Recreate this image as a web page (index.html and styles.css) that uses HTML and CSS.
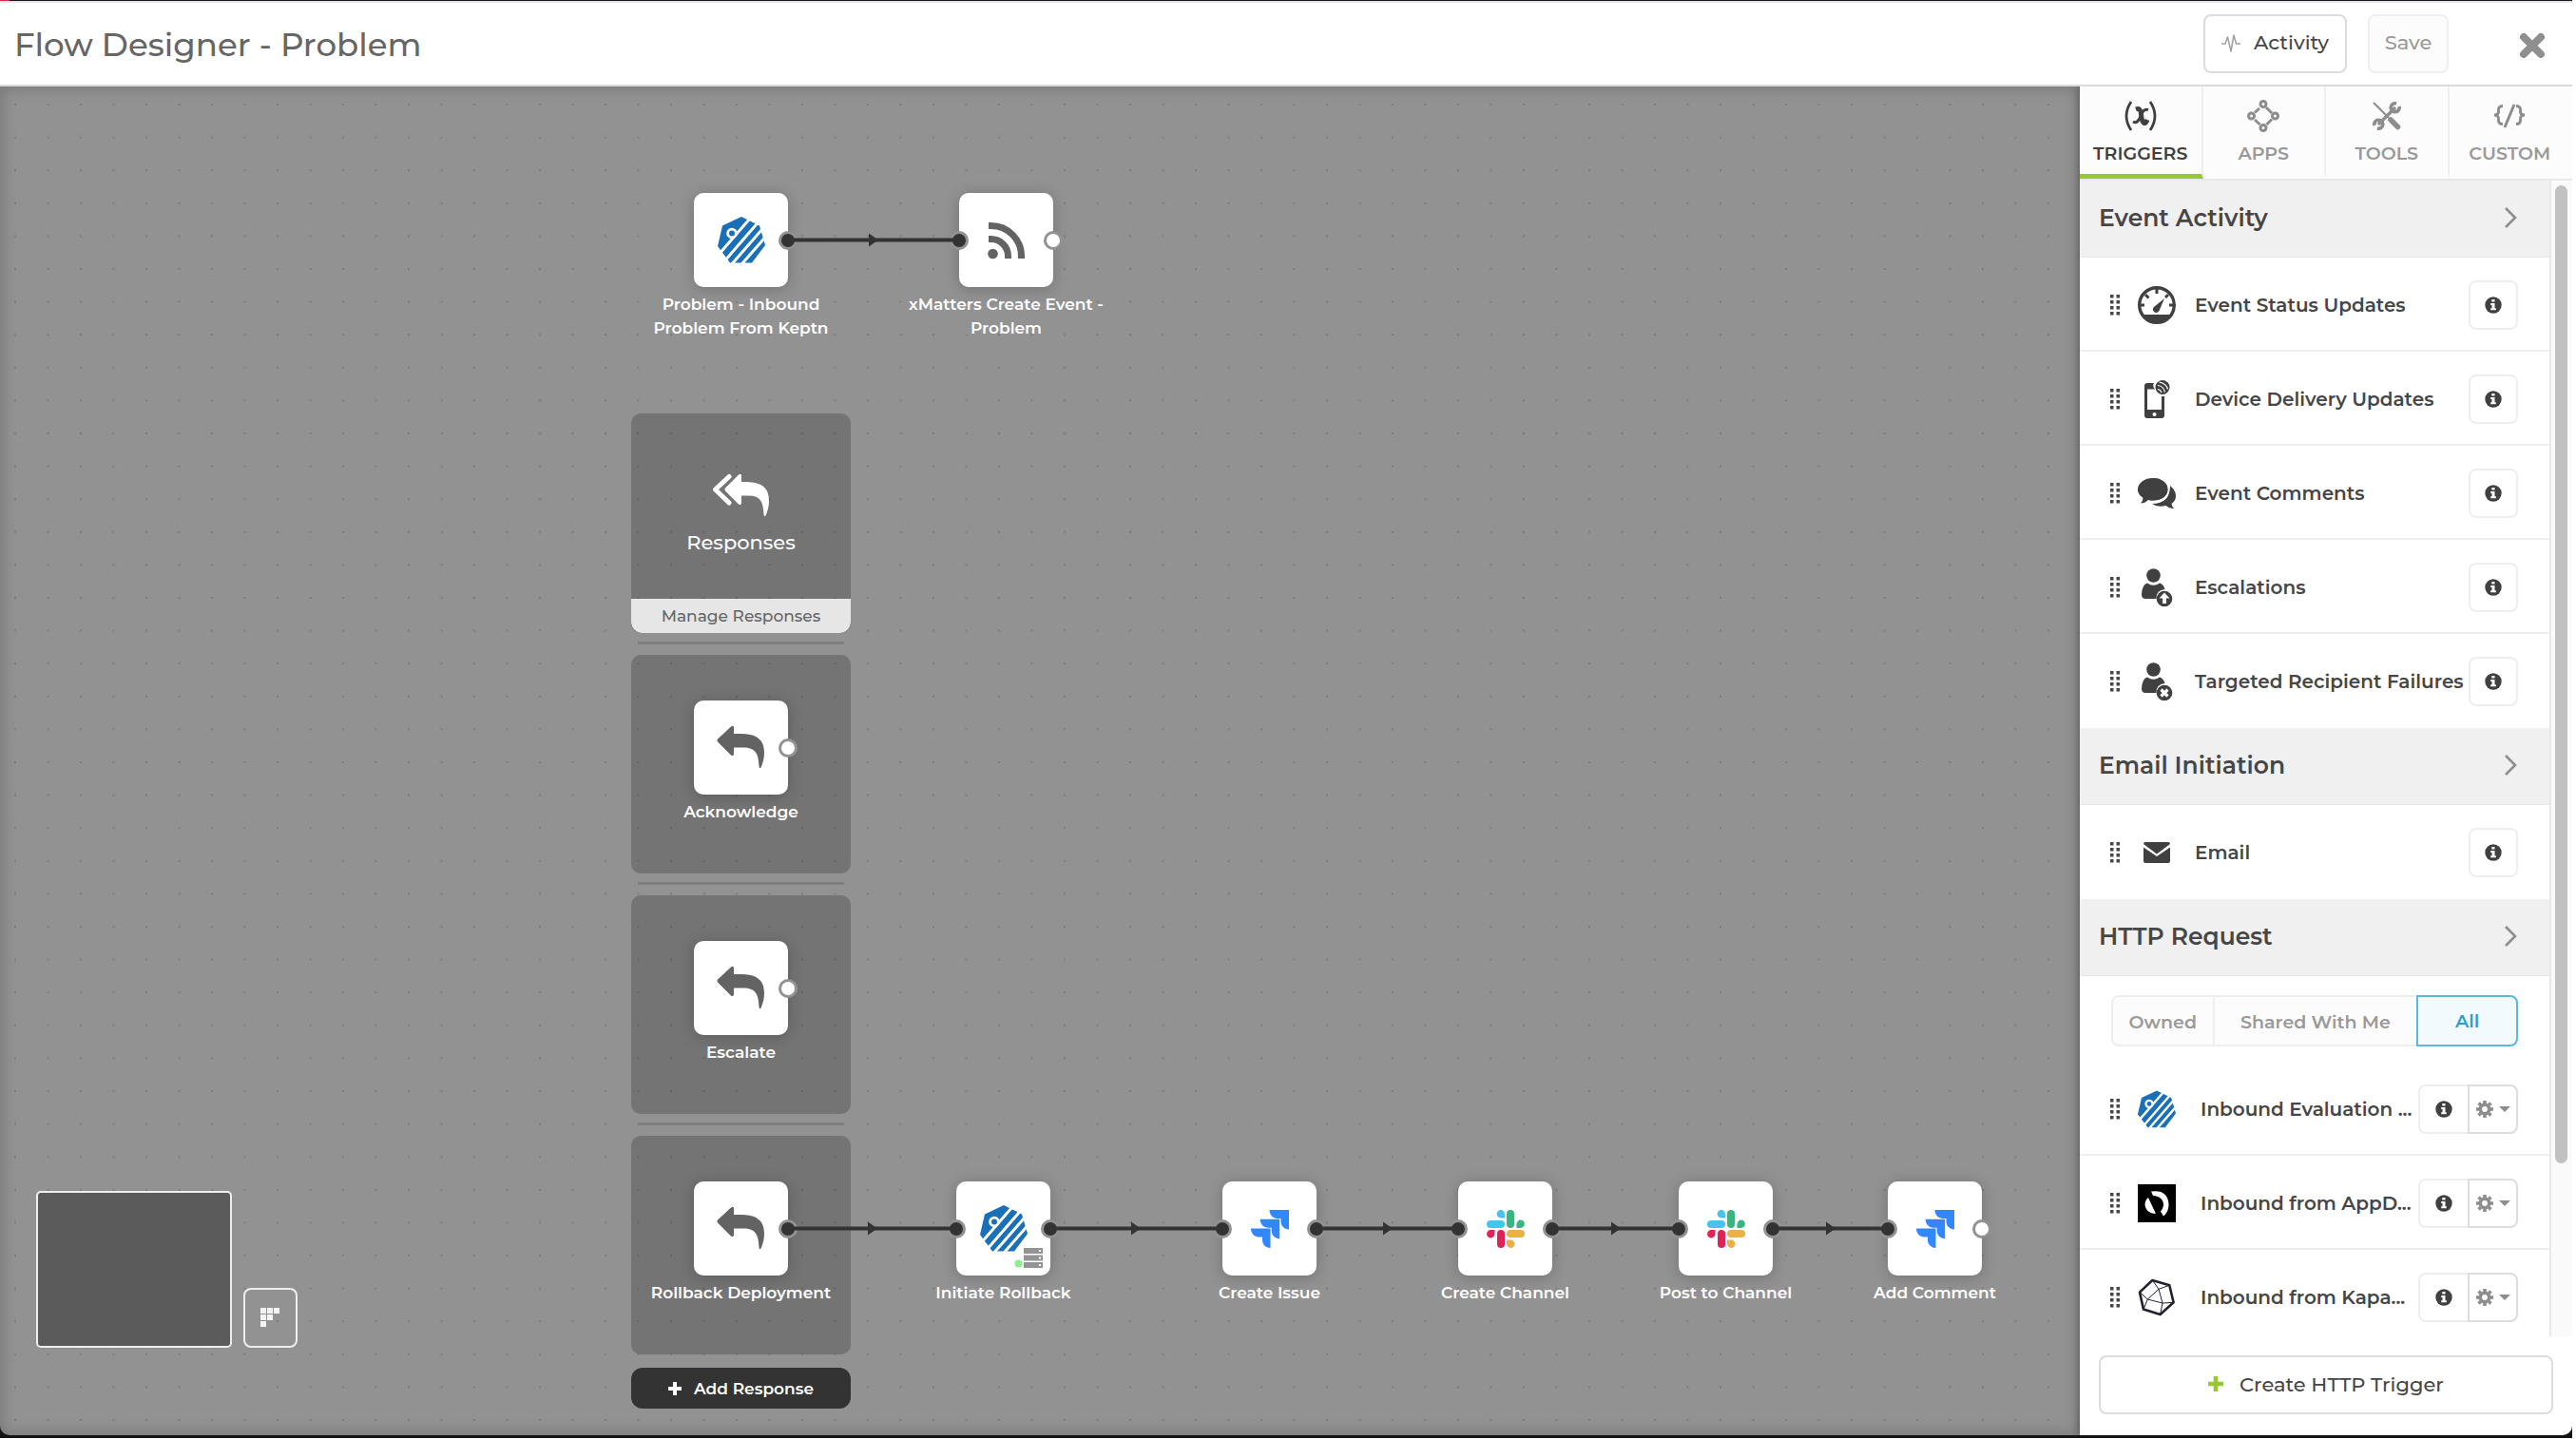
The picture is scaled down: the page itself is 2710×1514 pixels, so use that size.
FILE: index.html
```html
<!DOCTYPE html>
<html lang="en">
<head>
<meta charset="utf-8">
<title>Flow Designer - Problem</title>
<link rel="stylesheet" href="styles.css">
</head>
<body>
<svg class="sprite" aria-hidden="true">
  <symbol id="keptn" viewBox="0 0 50 49">
    <path fill="#1a70b8" d="M25 0 5 9.500 0 31 13 48.500H36L50 30 44 9.500z"/>
    <g stroke="#fff" stroke-width="3"><path d="M-2 43.300 36-.4M0 55 46 2M4 62.400 52 7.200M16 60.600 54 17"/></g>
    <circle cx="15" cy="17.500" r="4.400" fill="#1a70b8" stroke="#fff" stroke-width="2.800"/>
  </symbol>
  <symbol id="rss" viewBox="0 0 40 40">
    <circle cx="5.500" cy="34" r="5.300" fill="#636363"/>
    <path d="M1 4.500H3A32 32 0 0 1 35.500 37V39M1 18.500H3A18 18 0 0 1 21.500 37V39" fill="none" stroke="#636363" stroke-width="7" stroke-linejoin="round"/>
  </symbol>
  <symbol id="reply" viewBox="0 0 51 47">
    <path fill="currentColor" d="M1 14.500 15 1.500Q18-.5 18 2.500V9H24C41 9 50 14 50 29 50 35 48.500 40 46.500 44.500Q45 46.500 44.500 43.500C44 30 41 23.500 28 23.500H18V30Q18 33 15 31.500L1 17.500Q0 16 1 14.500z"/>
  </symbol>
  <symbol id="reply-all" viewBox="0 0 62 47">
    <path d="M18 3.500 3.500 17 18 31" fill="none" stroke="currentColor" stroke-width="5" stroke-linecap="round" stroke-linejoin="round"/>
    <path fill="currentColor" d="M14 15.500 28 1.500Q31-.5 31 2.500V9H35C51 9 60 14 60 29 60 35 58.500 40 56.500 44.500Q55 46.500 54.500 43.500C54 30 51 23.500 39 23.500H31V31Q31 34 28 32.500L14 18.500Q13 17 14 15.500z"/>
  </symbol>
  <symbol id="jira" viewBox="0 0 40 40">
    <g fill="#3187fb"><path id="jp" d="M19.500 0H40V20.500C35 20 31.500 17 31.500 12V9H28C23 9 19.500 5 19.500 0z"/><use href="#jp" transform="translate(-9.800 9.800)"/><use href="#jp" transform="translate(-19.500 19.500)"/></g>
  </symbol>
  <symbol id="slack" viewBox="0 0 40 40">
    <g fill="#45c5ee"><rect y="11" width="19" height="8" rx="4"/><path d="M19 8.500H15A4.200 4.200 0 1 1 19 4.500z"/></g>
    <g fill="#3bb580"><rect x="21" width="8" height="19" rx="4"/><path d="M31.500 19V15A4.200 4.200 0 1 1 35.500 19z"/></g>
    <g fill="#df2359"><rect x="11" y="21" width="8" height="19" rx="4"/><path d="M8.500 21V25A4.200 4.200 0 1 1 4.500 21z"/></g>
    <g fill="#ecb146"><rect x="21" y="21" width="19" height="8" rx="4"/><path d="M21 31.500H25A4.200 4.200 0 1 1 21 35.500z"/></g>
  </symbol>
  <symbol id="grip" viewBox="0 0 10 22">
    <path fill="#464646" d="M0 0h3.500v3.500H0zM6.500 0H10v3.500H6.500zM0 6h3.500v3.500H0zM6.500 6H10v3.500H6.500zM0 12h3.500v3.500H0zM6.500 12H10v3.500H6.500zM0 18h3.500v3.500H0zM6.500 18H10v3.500H6.500z"/>
  </symbol>
  <symbol id="info" viewBox="0 0 18 18">
    <circle cx="9" cy="9" r="8.700" fill="#404040"/><path fill="#fff" d="M7.300 3h3.200v2.500H7.300zM6.200 7h4.300v5.300h1.300V14.300H6.200v-2h1.300V9H6.200z"/>
  </symbol>
  <symbol id="chevron" viewBox="0 0 14 22"><path d="M2 1 12 11 2 21" fill="none" stroke="#8d8d8d" stroke-width="2.600"/></symbol>
  <symbol id="plus" viewBox="0 0 14 14"><path fill="currentColor" d="M5 0h4v5h5v4H9v5H5V9H0V5h5z"/></symbol>
  <symbol id="gauge" viewBox="0 0 40 40">
    <circle cx="20" cy="20" r="18.300" fill="none" stroke="#404040" stroke-width="3.400"/>
    <path fill="#404040" d="M6 30H34L30 35 20 39 10 35zM28 13 22.500 26Q20 29.500 17 27 14.500 24 17.500 21.500z"/>
    <path d="M20 3v5M8 9l3.500 3.500M32 9l-3 3M2 20h5M33 20h5" stroke="#404040" stroke-width="3"/>
  </symbol>
  <symbol id="phone" viewBox="0 0 40 40">
    <path fill="#404040" fill-rule="evenodd" d="M10 3H17Q15 6 18 9.500H10V31H25V17H28V37Q28 40 25 40H10Q7 40 7 37V6Q7 3 10 3zM17.500 34a2 2 0 1 0 .1 0z"/>
    <circle cx="26" cy="7.500" r="7.500" fill="#404040"/>
    <path d="M21 5.500Q27 6 28.500 12.500M22.500 2Q30 3.500 31.500 9.500M21 9.500Q24 10 25 13" fill="none" stroke="#fff" stroke-width="1.200"/>
  </symbol>
  <symbol id="comments" viewBox="0 0 40 40">
    <path fill="#404040" d="M34 12Q40 17 40 22.500 40 28 35.500 31 36 34 38 36 33 36 29.500 33 20 35 15 31 34 31 34 12z"/>
    <path fill="#404040" d="M16 4C25 4 31.500 9 31.500 16S25 27.500 16 27.500Q13.500 27.500 11 27 7.500 30.500 3 30.500 5.500 28 5.500 24.500 0 21 0 16 0 9 16 4z"/>
    <ellipse cx="15.700" cy="15.700" rx="15.700" ry="11.700" fill="#404040"/>
  </symbol>
  <symbol id="user" viewBox="0 0 40 40">
    <circle cx="16.500" cy="7.500" r="7.300" fill="#404040"/>
    <path fill="#404040" d="M10 15.500Q16.500 20 23 15.500 27 16.500 28.500 22 19 23 19.500 32H7.500Q4 31.500 4 27.500 4.500 17 10 15.500z"/>
    <circle cx="28" cy="32" r="8.300" fill="#404040"/>
  </symbol>
  <symbol id="mail" viewBox="0 0 40 40">
    <path fill="#404040" d="M8 9H32Q34 9 34 11L20 21.500 6 11Q6 9 8 9zM6 14.500 20 24 34 14.500V29Q34 31 32 31H8Q6 31 6 29z"/>
  </symbol>
  <symbol id="gear" viewBox="0 0 18 18">
    <circle cx="9" cy="9" r="4.700" fill="none" stroke="#8d8d8d" stroke-width="3.600"/>
    <path d="M9 0V3M9 15V18M0 9H3M15 9H18M2.600 2.600 4.700 4.700M13.300 13.300 15.400 15.400M2.600 15.400 4.700 13.300M13.300 4.700 15.400 2.600" stroke="#8d8d8d" stroke-width="3.600"/>
  </symbol>
</svg>

<div class="app">
  <div class="strip"></div>
  <header class="header">
    <h1 class="title">Flow Designer - Problem</h1>
    <button class="btn btn-activity" type="button">
      <svg width="20" height="20" viewBox="0 0 20 20"><path d="M0 11H4L6.500 4 10 19 13 2 15.500 11H20" fill="none" stroke="#a0a0a0" stroke-width="1.500" stroke-linejoin="round"/></svg>
      Activity
    </button>
    <button class="btn btn-save" type="button" disabled>Save</button>
    <button class="close" type="button" aria-label="Close"><svg width="28" height="28" viewBox="0 0 28 28"><path d="M5 5 23 23M23 5 5 23" stroke="#8f8f8f" stroke-width="8" stroke-linecap="round"/></svg></button>
  </header>

  <div class="body">
    <main class="canvas">
      <svg class="grid" width="100%" height="100%" aria-hidden="true">
        <defs><pattern id="dots" width="34.500" height="34.600" patternUnits="userSpaceOnUse" x="15" y="18"><rect width="2" height="2" fill="#7b7b7b"/></pattern></defs>
        <rect width="100%" height="100%" fill="url(#dots)"/>
      </svg>

      <div class="node n-inbound">
        <div class="tile"><svg width="50" height="49"><use href="#keptn"/></svg><i class="port out on"></i></div>
        <p class="label">Problem - Inbound Problem From Keptn</p>
      </div>
      <div class="node n-event">
        <div class="tile"><i class="port in on"></i><svg width="40" height="40"><use href="#rss"/></svg><i class="port out"></i></div>
        <p class="label">xMatters Create Event - Problem</p>
      </div>

      <section class="responses">
        <div class="panel head">
          <div class="head-main"><svg width="62" height="47"><use href="#reply-all"/></svg><h2 class="head-title">Responses</h2></div>
          <button class="manage" type="button">Manage Responses</button>
        </div>
        <hr class="rule">
        <div class="panel">
          <div class="tile"><svg width="51" height="47"><use href="#reply"/></svg><i class="port out"></i></div>
          <p class="label">Acknowledge</p>
        </div>
        <hr class="rule">
        <div class="panel">
          <div class="tile"><svg width="51" height="47"><use href="#reply"/></svg><i class="port out"></i></div>
          <p class="label">Escalate</p>
        </div>
        <hr class="rule">
        <div class="panel">
          <div class="tile"><svg width="51" height="47"><use href="#reply"/></svg><i class="port out on"></i></div>
          <p class="label">Rollback Deployment</p>
        </div>
        <button class="add" type="button"><svg width="14" height="14"><use href="#plus"/></svg>Add Response</button>
      </section>

      <div class="node n-rollback">
        <div class="tile"><i class="port in on"></i><svg width="50" height="49"><use href="#keptn"/></svg><i class="port out on"></i>
          <svg class="agent" width="30" height="22" viewBox="0 0 30 22"><circle cx="4.500" cy="16.500" r="4" fill="#90ee90"/><path fill="#949494" d="M10 0h20v6H10zM10 7.500h20v6H10zM10 15h20v6H10z"/><path fill="#fff" d="M26 2h2v2h-2zM26 9.500h2v2h-2zM26 17h2v2h-2z"/></svg>
        </div>
        <p class="label">Initiate Rollback</p>
      </div>
      <div class="node n-issue">
        <div class="tile"><i class="port in on"></i><svg width="40" height="40"><use href="#jira"/></svg><i class="port out on"></i></div>
        <p class="label">Create Issue</p>
      </div>
      <div class="node n-channel">
        <div class="tile"><i class="port in on"></i><svg width="40" height="40"><use href="#slack"/></svg><i class="port out on"></i></div>
        <p class="label">Create Channel</p>
      </div>
      <div class="node n-post">
        <div class="tile"><i class="port in on"></i><svg width="40" height="40"><use href="#slack"/></svg><i class="port out on"></i></div>
        <p class="label">Post to Channel</p>
      </div>
      <div class="node n-comment">
        <div class="tile"><i class="port in on"></i><svg width="40" height="40"><use href="#jira"/></svg><i class="port out"></i></div>
        <p class="label">Add Comment</p>
      </div>

      <svg class="wires" width="100%" height="100%" aria-hidden="true">
        <path stroke="#333" stroke-width="4" d="M829 161.500H1009M829 1201.500H1006M1105 1201.500H1286M1385 1201.500H1534M1633 1201.500H1766M1865 1201.500H1986"/>
        <path fill="#333" d="M914 154.500V168.500L924 161.500zM913 1194.500V1208.500L923 1201.500zM1190 1194.500V1208.500L1200 1201.500zM1455 1194.500V1208.500L1465 1201.500zM1695 1194.500V1208.500L1705 1201.500zM1921 1194.500V1208.500L1931 1201.500z"/>
      </svg>

      <div class="overview">
        <div class="minimap"></div>
        <button class="fit" type="button" aria-label="Toggle overview"><svg width="21" height="21" viewBox="0 0 21 21"><path fill="#f4f4f4" d="M0 0h6v6H0zM7 0h6v6H7zM14 0h6v6h-6zM0 7h6v6H0zM7 7h6v6H7zM0 14h6v6H0z"/></svg></button>
      </div>
    </main>

    <aside class="side">
      <nav class="tabs">
        <button class="tab active" type="button"><svg width="34" height="32" viewBox="0 0 34 32" fill="none" stroke="#404040"><path d="M7 1Q-3 16 7 31M27 1Q37 16 27 31" stroke-width="2.800"/><path d="M12 9Q17 7 17.500 14T20 23 24 20" stroke-width="5"/><path d="M25 9.500Q20 8 17.500 15 14 25 9 22" stroke-width="3"/></svg>TRIGGERS</button>
        <button class="tab" type="button"><svg width="34" height="34" viewBox="0 0 34 34" fill="none" stroke="#8d8d8d" stroke-width="3"><circle cx="17" cy="4.500" r="3"/><circle cx="4.500" cy="17" r="3"/><circle cx="29.500" cy="17" r="3"/><circle cx="17" cy="29.500" r="3"/><path d="M13 9 8 13.500M20 8l6 6M8 21l5.500 5M26 20.500 20.500 26"/></svg>APPS</button>
        <button class="tab" type="button"><svg width="30" height="30" viewBox="0 0 30 30"><path d="M1 1 17 17" stroke="#8d8d8d" stroke-width="2.200"/><path d="M19 19 26.500 26.500" stroke="#8d8d8d" stroke-width="5.500" stroke-linecap="round"/><path d="M6 24 24 6" stroke="#8d8d8d" stroke-width="3.400"/><path d="M25 2A4.500 4.500 0 1 0 28 5M5 28A4.500 4.500 0 1 0 2 25" fill="none" stroke="#8d8d8d" stroke-width="3.600"/></svg>TOOLS</button>
        <button class="tab" type="button"><svg width="34" height="26" viewBox="0 0 34 26" fill="none" stroke="#8d8d8d" stroke-width="3"><path d="M10 2.500Q5 2.500 5.500 7.500 6 12 1 12 6 12 5.500 17 5 21.500 10 21.500M24 2.500Q29 2.500 28.500 7.500 28 12 33 12 28 12 28.500 17 29 21.500 24 21.500M22 1 12 25"/></svg>CUSTOM</button>
      </nav>

      <div class="scroll">
        <div class="list">
          <h2 class="group">Event Activity <svg width="14" height="22"><use href="#chevron"/></svg></h2>
          <ul class="rows">
            <li class="row"><svg width="10" height="22"><use href="#grip"/></svg><svg class="ico" width="40" height="40"><use href="#gauge"/></svg><span class="name">Event Status Updates</span><button class="info" type="button" aria-label="Info"><svg width="18" height="18"><use href="#info"/></svg></button></li>
            <li class="row"><svg width="10" height="22"><use href="#grip"/></svg><svg class="ico" width="40" height="40"><use href="#phone"/></svg><span class="name">Device Delivery Updates</span><button class="info" type="button" aria-label="Info"><svg width="18" height="18"><use href="#info"/></svg></button></li>
            <li class="row"><svg width="10" height="22"><use href="#grip"/></svg><svg class="ico" width="40" height="40"><use href="#comments"/></svg><span class="name">Event Comments</span><button class="info" type="button" aria-label="Info"><svg width="18" height="18"><use href="#info"/></svg></button></li>
            <li class="row"><svg width="10" height="22"><use href="#grip"/></svg><svg class="ico" width="40" height="40" viewBox="0 0 40 40"><use href="#user"/><path fill="#fff" d="M28 25.500 33.500 31.500H30V37H26V31.500H22.500z"/></svg><span class="name">Escalations</span><button class="info" type="button" aria-label="Info"><svg width="18" height="18"><use href="#info"/></svg></button></li>
            <li class="row"><svg width="10" height="22"><use href="#grip"/></svg><svg class="ico" width="40" height="40" viewBox="0 0 40 40"><use href="#user"/><path d="M24.500 28.500 31.500 35.500M31.500 28.500 24.500 35.500" stroke="#fff" stroke-width="3.200"/></svg><span class="name">Targeted Recipient Failures</span><button class="info" type="button" aria-label="Info"><svg width="18" height="18"><use href="#info"/></svg></button></li>
          </ul>
          <h2 class="group">Email Initiation <svg width="14" height="22"><use href="#chevron"/></svg></h2>
          <ul class="rows">
            <li class="row"><svg width="10" height="22"><use href="#grip"/></svg><svg class="ico" width="40" height="40"><use href="#mail"/></svg><span class="name">Email</span><button class="info" type="button" aria-label="Info"><svg width="18" height="18"><use href="#info"/></svg></button></li>
          </ul>
          <h2 class="group">HTTP Request <svg width="14" height="22"><use href="#chevron"/></svg></h2>
          <div class="filter">
            <button class="seg owned" type="button">Owned</button>
            <button class="seg shared" type="button">Shared With Me</button>
            <button class="seg all" type="button">All</button>
          </div>
          <ul class="rows">
            <li class="row"><svg width="10" height="22"><use href="#grip"/></svg><svg class="ico" width="40" height="40"><use href="#keptn"/></svg><span class="name wide">Inbound Evaluation ...</span><button class="info joined" type="button" aria-label="Info"><svg width="18" height="18"><use href="#info"/></svg></button><button class="menu" type="button" aria-label="Settings"><svg width="18" height="18"><use href="#gear"/></svg><i class="caret"></i></button></li>
            <li class="row"><svg width="10" height="22"><use href="#grip"/></svg><svg class="ico" width="40" height="40" viewBox="0 0 40 40"><path d="M0 0h40v40H0z"/><path fill="#fff" d="M11 14 19 31Q8.500 30.500 7.500 21.500 7.500 17 11 14zM14 7.500Q31.500 5 32.500 21 32.500 29 27 33.500L24 28.500C30 22 27 12.500 16 12z"/></svg><span class="name wide">Inbound from AppD...</span><button class="info joined" type="button" aria-label="Info"><svg width="18" height="18"><use href="#info"/></svg></button><button class="menu" type="button" aria-label="Settings"><svg width="18" height="18"><use href="#gear"/></svg><i class="caret"></i></button></li>
            <li class="row"><svg width="10" height="22"><use href="#grip"/></svg><svg class="ico" width="40" height="40" viewBox="0 0 40 40" fill="none" stroke="#22222e"><path stroke-width="2.600" stroke-linejoin="round" d="M15.300 2 33.300 7.300 37.600 25.300 23.600 38 6 32.600 2 14.600z"/><path d="M22 11.300 10.300 22 26 26zL15.300 2M22 11.300 33.300 7.300M10.300 22 2 14.600M10.300 22 6 32.600M26 26 37.600 25.300M26 26 23.600 38"/></svg><span class="name wide">Inbound from Kapa...</span><button class="info joined" type="button" aria-label="Info"><svg width="18" height="18"><use href="#info"/></svg></button><button class="menu" type="button" aria-label="Settings"><svg width="18" height="18"><use href="#gear"/></svg><i class="caret"></i></button></li>
          </ul>
        </div>
        <div class="track"><div class="thumb"></div></div>
      </div>

      <div class="foot">
        <button class="create" type="button"><svg class="green" width="16" height="16" viewBox="0 0 14 14"><use href="#plus"/></svg>Create HTTP Trigger</button>
      </div>
    </aside>
  </div>
</div>
</body>
</html>
```
FILE: styles.css
```css
* { box-sizing: border-box; }
body, h1, h2, p, ul { margin: 0; padding: 0; }
body {
  background: #fff;
  font-family: Montserrat, Inter, sans-serif;
  font-size: 20px;
  color: #464646;
}
button {
  font: inherit;
  color: inherit;
  margin: 0;
  padding: 0;
  background: #fff;
  border: 0;
  display: flex;
  align-items: center;
  justify-content: center;
}
svg { flex: none; display: block; }
.sprite { position: absolute; width: 0; height: 0; }

.app {
  height: calc(100vh - 1px);
  margin-right: 4px;
  padding-bottom: 3px;
  background: #141414;
  display: flex;
  flex-direction: column;
}
.strip { height: 1px; flex: none; background: linear-gradient(to right, #d5303e 10px, #16161e 10px); }

/* Header */
.header {
  flex: none;
  height: 90px;
  display: flex;
  align-items: center;
  padding: 0 28px 0 15px;
  background: #fff;
  border-top: 2px solid #e6e5ea;
  border-bottom: 2px solid #d9dada;
}
.title { flex: 1; padding-top: 2px; font-size: 34px; font-weight: 500; color: #666; }
.btn { height: 62px; padding-bottom: 3px; border: 2px solid #dcdcdc; border-radius: 8px; font-size: 21px; font-weight: 500; }
.btn-activity { width: 151px; gap: 14px; margin-right: 22px; }
.btn-save { width: 85px; background: #fcfcfc; border-color: #eee; color: #999; }
.close { margin-left: 74px; padding-top: 3px; }

.body { flex: 1; min-height: 0; display: flex; border-radius: 0 0 10px 10px; overflow: hidden; }

/* Canvas */
.canvas {
  flex: 1;
  min-width: 0;
  position: relative;
  overflow: hidden;
  background: #929292;
  box-shadow: inset 0 0 16px 2px rgba(0, 0, 0, .18);
}
.grid, .wires { position: absolute; left: 0; top: 0; pointer-events: none; }
.node { position: absolute; width: 217px; display: flex; flex-direction: column; align-items: center; }
.n-inbound { left: 671px; top: 112px; }
.n-event { left: 950px; top: 112px; }
.n-rollback { left: 947px; top: 1152px; }
.n-issue { left: 1227px; top: 1152px; }
.n-channel { left: 1475px; top: 1152px; }
.n-post { left: 1707px; top: 1152px; }
.n-comment { left: 1927px; top: 1152px; }
.tile {
  position: relative;
  width: 99px;
  height: 99px;
  display: flex;
  align-items: center;
  justify-content: center;
  background: #fff;
  border-radius: 10px;
  box-shadow: 0 2px 16px rgba(0, 0, 0, .22);
  color: #636363;
}
.label {
  margin-top: 6px;
  font-size: 17px;
  font-weight: 600;
  line-height: 25px;
  text-align: center;
  color: #fff;
}
.port {
  position: absolute;
  top: 40px;
  width: 20px;
  height: 20px;
  border: 3px solid #929292;
  border-radius: 50%;
  background: #fff;
}
.port.on { background: #333; }
.port.in { left: -10px; }
.port.out { right: -10px; }
.agent { position: absolute; right: 8px; bottom: 7px; }

.responses { position: absolute; left: 664px; top: 344px; width: 231px; display: flex; flex-direction: column; }
.panel {
  height: 230px;
  display: flex;
  flex-direction: column;
  align-items: center;
  padding-top: 48px;
  background: rgba(0, 0, 0, .2);
  border-radius: 10px;
}
.panel.head { height: 231px; padding-top: 0; overflow: hidden; }
.head-main { flex: 1; padding-top: 63px; display: flex; flex-direction: column; align-items: center; gap: 13px; color: #fff; }
.head-title { font-size: 21px; font-weight: 500; line-height: 26px; }
.manage { width: 100%; height: 36px; border-radius: 0 0 12px 12px; background: #e6e6e6; color: #666; font-size: 17px; font-weight: 500; }
.rule { width: 217px; height: 3px; margin: 9px auto 11px; border: 0; background: #7f7f7f; }
.add { height: 43px; margin-top: 14px; gap: 13px; border-radius: 12px; background: #333; color: #fff; font-size: 17px; font-weight: 600; }

.overview { position: absolute; left: 38px; bottom: 92px; display: flex; align-items: flex-end; gap: 12px; }
.minimap { width: 206px; height: 165px; border: 2px solid #eee; border-radius: 5px; background: #5b5b5b; }
.fit { width: 57px; height: 63px; border: 2px solid #eee; border-radius: 8px; background: none; }

/* Sidebar */
.side { flex: none; width: 518px; display: flex; flex-direction: column; background: #fff; box-shadow: 0 0 8px rgba(0, 0, 0, .4); z-index: 1; }
.tabs { flex: none; height: 99px; display: flex; border-bottom: 2px solid #e8e8e8; }
.tab {
  flex: 1;
  flex-direction: column;
  justify-content: flex-end;
  padding: 2px 0 9px;
  background: #fcfcfc;
  border-right: 2px solid #eee;
  border-bottom: 5px solid #fcfcfc;
  color: #999;
  font-size: 19px;
  font-weight: 600;
  line-height: 24px;
}
.tab:last-child { border-right-color: #fcfcfc; }
.tab.active { color: #404040; border-bottom-color: #98c833; }
.tab svg { margin: auto; }
.scroll { flex: 1; min-height: 0; display: flex; }
.list { flex: 1; overflow: hidden; }
.track { width: 24px; padding: 5px 5px 0 4px; background: #fafafa; border-left: 2px solid #e8e8e8; }
.thumb { width: 13px; height: 85%; border-radius: 7px; background: #c1c1c1; }

.group {
  height: 81px;
  display: flex;
  align-items: center;
  justify-content: space-between;
  padding: 0 34px 2px 20px;
  background: #f0f0f0;
  border-bottom: 1px solid #e8e8e8;
  font-size: 25px;
  font-weight: 600;
}
.rows { list-style: none; }
.row { height: 99px; display: flex; align-items: center; padding: 3px 33px 0 32px; border-bottom: 2px solid #eee; }
.rows .row:last-child { border-bottom-color: transparent; }
.ico { margin-left: 19px; }
.name { flex: 1; min-width: 0; padding-left: 20px; font-weight: 600; white-space: nowrap; }
.name.wide { padding-left: 26px; }
.info, .menu { flex: none; width: 52px; height: 52px; border: 2px solid #eee; border-radius: 8px; }
.info.joined { border-right: 0; border-radius: 8px 0 0 8px; }
.menu { width: 53px; gap: 6px; border-color: #ddd; border-radius: 0 8px 8px 0; }
.caret { border: 6px solid transparent; border-top-color: #8d8d8d; border-bottom: 0; }

.filter { display: flex; padding: 20px 33px 16px; }
.seg { height: 54px; border: 2px solid #eee; background: #fcfcfc; color: #999; font-size: 19px; font-weight: 600; }
.owned { flex: 106; padding-top: 3px; border-radius: 8px 0 0 8px; }
.shared { flex: 216; padding-top: 3px; border-left: 0; border-right: 0; }
.all { flex: 104; border-color: #5bb9dd; border-radius: 0 8px 8px 0; background: #f2fafd; color: #2a9fcf; }

.foot { flex: none; padding: 20px 20px 22px; }
.create { width: 100%; height: 62px; padding-bottom: 2px; gap: 17px; border: 2px solid #ddd; border-radius: 8px; font-size: 21px; font-weight: 500; }
.green { color: #98c833; }
```
